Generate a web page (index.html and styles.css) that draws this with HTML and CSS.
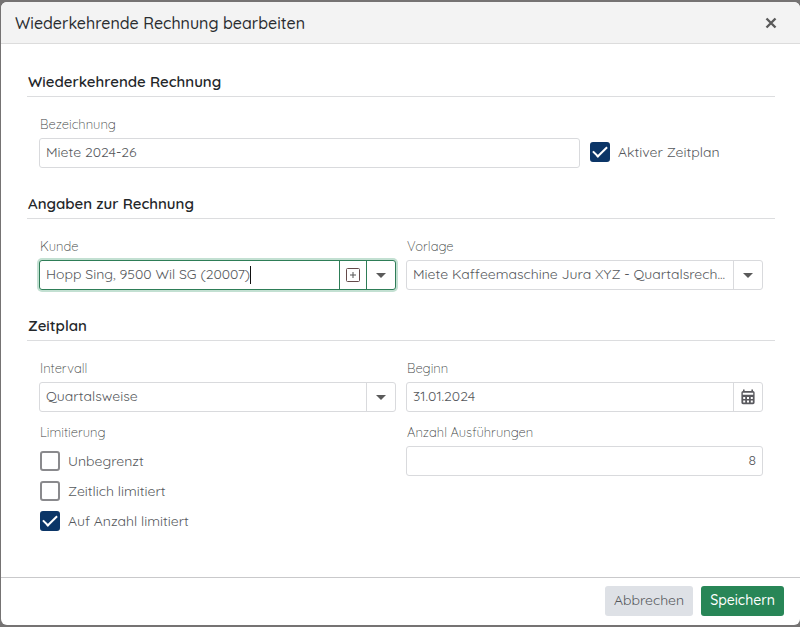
FILE: index.html
```html
<!DOCTYPE html>
<html lang="de">
<head>
    <meta charset="UTF-8">
    <meta name="viewport" content="width=device-width, initial-scale=1">
    <title>Wiederkehrende Rechnung bearbeiten</title>
    <link rel="stylesheet" href="styles.css">
</head>
<body>
    <form class="dialog" role="dialog" aria-labelledby="dialogTitle">
        <header class="dialog-header">
            <h1 id="dialogTitle">Wiederkehrende Rechnung bearbeiten</h1>
            <button type="button" class="close" aria-label="Schliessen">
                <svg width="12" height="12" viewBox="0 0 12 12"><path d="M1.500 1.500l9 9M10.500 1.500l-9 9"/></svg>
            </button>
        </header>

        <div class="dialog-body">
            <section>
                <h2>Wiederkehrende Rechnung</h2>
                <div class="row-wide">
                    <div class="field">
                        <label for="bezeichnung">Bezeichnung</label>
                        <div class="control">
                            <input type="text" id="bezeichnung" value="Miete 2024-26">
                        </div>
                    </div>
                    <label class="check check-inline"><input type="checkbox" checked> Aktiver Zeitplan</label>
                </div>
            </section>

            <section>
                <h2>Angaben zur Rechnung</h2>
                <div class="row">
                    <div class="field">
                        <label for="kunde">Kunde</label>
                        <div class="control focused">
                            <div class="typed">
                                <input type="text" id="kunde" value="Hopp Sing, 9500 Wil SG (20007)" autocomplete="off">
                                <span class="cursor"></span>
                            </div>
                            <button type="button" class="addon addon-add" aria-label="Kunde hinzufügen">
                                <svg width="14" height="14" viewBox="0 0 14 14">
                                    <rect x="0.5" y="0.5" width="13" height="13" rx="1" stroke="#654a4a"/>
                                    <path d="M7 4v6M4 7h6" stroke="#555"/>
                                </svg>
                            </button>
                            <button type="button" class="addon" aria-label="Kunden anzeigen">
                                <svg class="caret" width="10" height="5" viewBox="0 0 10 5"><path d="M0 0h10L5 5z"/></svg>
                            </button>
                        </div>
                    </div>
                    <div class="field">
                        <label for="vorlage">Vorlage</label>
                        <div class="control">
                            <select id="vorlage">
                                <option>Miete Kaffeemaschine Jura XYZ - Quartalsrech...</option>
                            </select>
                            <span class="addon addon-select">
                                <svg class="caret" width="10" height="5" viewBox="0 0 10 5"><path d="M0 0h10L5 5z"/></svg>
                            </span>
                        </div>
                    </div>
                </div>
            </section>

            <section>
                <h2>Zeitplan</h2>
                <div class="row">
                    <div class="field">
                        <label for="intervall">Intervall</label>
                        <div class="control">
                            <select id="intervall">
                                <option>Quartalsweise</option>
                            </select>
                            <span class="addon addon-select">
                                <svg class="caret" width="10" height="5" viewBox="0 0 10 5"><path d="M0 0h10L5 5z"/></svg>
                            </span>
                        </div>
                    </div>
                    <div class="field">
                        <label for="beginn">Beginn</label>
                        <div class="control">
                            <input type="text" id="beginn" value="31.01.2024">
                            <button type="button" class="addon" aria-label="Kalender">
                                <svg width="14" height="16" viewBox="0 0 14 16">
                                    <path fill="#5a5a5f" fill-rule="evenodd" d="M2 2V0.5h1.600V2h6.800V0.5H12V2a1.600 1.600 0 0 1 1.600 1.600v10A1.600 1.600 0 0 1 12 15.200H2a1.600 1.600 0 0 1-1.600-1.600v-10A1.600 1.600 0 0 1 2 2zM1.800 3.800v2h10.400v-2zM2.200 8v2h2V8zM6 8v2h2V8zM9.800 8v2h2V8zM2.200 11.500v2h2v-2zM6 11.500v2h2v-2zM9.800 11.500v2h2v-2z"/>
                                </svg>
                            </button>
                        </div>
                    </div>
                    <fieldset class="field">
                        <legend>Limitierung</legend>
                        <label class="check"><input type="checkbox"> Unbegrenzt</label>
                        <label class="check"><input type="checkbox"> Zeitlich limitiert</label>
                        <label class="check"><input type="checkbox" checked> Auf Anzahl limitiert</label>
                    </fieldset>
                    <div class="field">
                        <label for="anzahl">Anzahl Ausführungen</label>
                        <div class="control">
                            <input type="text" class="number" id="anzahl" inputmode="numeric" value="8">
                        </div>
                    </div>
                </div>
            </section>
        </div>

        <footer class="dialog-footer">
            <button type="button" class="btn">Abbrechen</button>
            <button type="submit" class="btn btn-primary">Speichern</button>
        </footer>
    </form>
</body>
</html>
```
FILE: styles.css
```css
* {
    box-sizing: border-box;
}

body {
    margin: 0;
    padding: 2px 0 2px 1px;
    min-height: 100vh;
    display: flex;
    background-color: #757373;
    color: #55585c;
    font-family: Quicksand, Lato, sans-serif;
    font-size: 14px;
    font-weight: 400;
    line-height: 20px;
}

input, select, button {
    font: inherit;
    color: inherit;
}

.dialog {
    flex: 1;
    min-width: 0;
    display: flex;
    flex-direction: column;
    background-color: #fff;
    border-radius: 6px;
    overflow: hidden;
}

.dialog-header {
    display: flex;
    align-items: center;
    justify-content: space-between;
    height: 42px;
    padding: 0 19px 0 14px;
    background-color: #f3f3f3;
    border-bottom: 1px solid #dcdcdc;
}

h1 {
    margin: 0;
    font-size: 16px;
    font-weight: 500;
    color: #2a2d30;
}

.close {
    display: grid;
    place-items: center;
    width: 20px;
    height: 20px;
    padding: 0;
    border: none;
    background: none;
}

.close path {
    stroke: #5a5a5a;
    stroke-width: 2.4;
}

.dialog-body {
    flex: 1;
    padding: 28px 25px 0 26px;
}

h2 {
    margin: 0 0 17px;
    padding: 0 1px 4px;
    border-bottom: 1px solid #dcdddf;
    font-size: 15px;
    font-weight: 600;
    color: #24272a;
}

section {
    margin-bottom: 26px;
}

.row, .row-wide {
    display: grid;
    gap: 0 10px;
    padding: 0 12px;
}

.row {
    grid-template-columns: 1fr 1fr;
}

.row-wide {
    grid-template-columns: 25fr 8fr;
    align-items: end;
}

.field {
    min-width: 0;
    margin: 0 0 10px;
    padding: 0;
    border: none;
}

.row-wide .field, section:nth-child(2) .field {
    margin-bottom: 0;
}

.field > label:not(.check), legend {
    display: block;
    margin-bottom: 4px;
    padding: 0 1px;
    font-size: 13px;
    font-weight: 300;
    color: #3c3f42;
}

.control {
    position: relative;
    display: flex;
    height: 30px;
    border: 1px solid #d9dadd;
    border-radius: 3px;
    background-color: #fff;
}

.control input, .control select {
    width: 100%;
    height: 100%;
    min-width: 0;
    padding: 0 6px 2px;
    border: none;
    outline: none;
    background: none;
    appearance: none;
}

.control select {
    padding-right: 34px;
    text-overflow: ellipsis;
}

.control .number {
    text-align: right;
}

.typed {
    flex: 1;
    display: flex;
    align-items: center;
    min-width: 0;
}

.typed input {
    width: auto;
    padding-right: 0;
    field-sizing: content;
    caret-color: transparent;
}

.cursor {
    width: 1px;
    height: 18px;
    background-color: #111;
}

.focused {
    border-color: #2e7d57;
    box-shadow: 0 0 0 2px #c3e0d2;
}

.addon {
    display: grid;
    place-items: center;
    flex: none;
    width: 29px;
    padding: 0;
    border: none;
    border-left: 1px solid #d9dadd;
    background: none;
}

.focused .addon {
    border-color: #2e7d57;
}

.addon-add {
    width: 27px;
}

.addon-add svg {
    fill: none;
}

.addon-select {
    position: absolute;
    top: 0;
    right: 0;
    bottom: 0;
    pointer-events: none;
}

.caret {
    fill: #5a5a5a;
}

.check {
    display: flex;
    align-items: center;
    gap: 8px;
    height: 30px;
    padding-left: 1px;
}

.check-inline {
    height: 28px;
    margin-bottom: 2px;
    padding-left: 0;
}

.check input {
    width: 20px;
    height: 20px;
    margin: 0;
    border: 2px solid #8a8a8d;
    border-radius: 3px;
    background-color: #fff;
    appearance: none;
    display: grid;
    place-items: center;
}

.check input:checked {
    border-color: #0b3567;
    background-color: #0b3567;
}

.check input:checked::before {
    content: "";
    width: 12px;
    height: 6px;
    margin-bottom: 4px;
    border: solid #fff;
    border-width: 0 0 2px 2px;
    transform: rotate(-45deg);
}

.dialog-footer {
    display: flex;
    justify-content: flex-end;
    gap: 8px;
    padding: 8px 16px 9px;
    border-top: 1px solid #c9c9cb;
}

.btn {
    height: 30px;
    padding: 0 9px 2px;
    border: none;
    border-radius: 3px;
    background-color: #dee1e6;
}

.btn-primary {
    background-color: #288657;
    color: #fff;
    font-weight: 500;
}
```
